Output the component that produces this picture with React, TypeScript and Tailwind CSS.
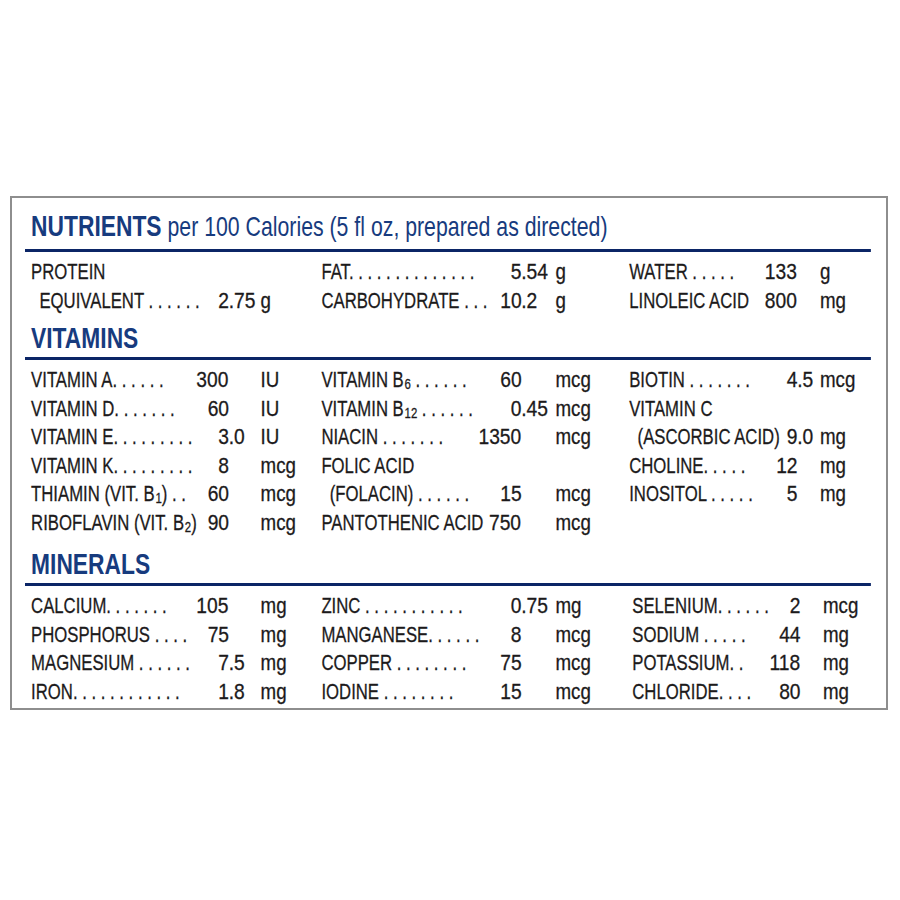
import React from 'react';

// Label type is set in Liberation Sans and squeezed horizontally (scale-x) to get the
// condensed Helvetica look of the printed panel. All widths below are pre-scale values.

type Entry = {
  label: React.ReactNode;
  int?: string;
  frac?: string;
  unit?: string;
  indent?: boolean;
};

type Col = { labelW: string; intW: string; fracW: string };

const COLS: Col[] = [
  { labelW: 'w-[207px]', intW: 'w-[53px]', fracW: 'w-[42px]' },
  { labelW: 'w-[197px]', intW: 'w-[66px]', fracW: 'w-[45px]' },
  { labelW: 'w-[168px]', intW: 'w-[53px]', fracW: 'w-[30px]' },
];

const Sub = ({ children }: { children: React.ReactNode }) => (
  <sub className="text-[15px] leading-none relative -bottom-[2px] ml-[1px]">{children}</sub>
);

const nutrients: Entry[][] = [
  [
    { label: 'PROTEIN' },
    { label: 'EQUIVALENT . . . . . .', int: '2', frac: '.75', unit: 'g', indent: true },
  ],
  [
    { label: 'FAT. . . . . . . . . . . . . .', int: '5', frac: '.54', unit: 'g' },
    { label: 'CARBOHYDRATE . . .', int: '10', frac: '.2', unit: 'g' },
  ],
  [
    { label: 'WATER . . . . .', int: '133', unit: 'g' },
    { label: 'LINOLEIC ACID', int: '800', unit: 'mg' },
  ],
];

const vitamins: Entry[][] = [
  [
    { label: 'VITAMIN A. . . . . .', int: '300', unit: 'IU' },
    { label: 'VITAMIN D. . . . . . .', int: '60', unit: 'IU' },
    { label: 'VITAMIN E. . . . . . . . .', int: '3', frac: '.0', unit: 'IU' },
    { label: 'VITAMIN K. . . . . . . . .', int: '8', unit: 'mcg' },
    { label: <>THIAMIN (VIT. B<Sub>1</Sub>) . .</>, int: '60', unit: 'mcg' },
    { label: <>RIBOFLAVIN (VIT. B<Sub>2</Sub>)</>, int: '90', unit: 'mcg' },
  ],
  [
    { label: <>VITAMIN B<Sub>6</Sub> . . . . . .</>, int: '60', unit: 'mcg' },
    { label: <>VITAMIN B<Sub>12</Sub> . . . . . .</>, int: '0', frac: '.45', unit: 'mcg' },
    { label: 'NIACIN . . . . . . .', int: '1350', unit: 'mcg' },
    { label: 'FOLIC ACID' },
    { label: '(FOLACIN) . . . . . .', int: '15', unit: 'mcg', indent: true },
    { label: 'PANTOTHENIC ACID', int: '750', unit: 'mcg' },
  ],
  [
    { label: 'BIOTIN . . . . . . .', int: '4', frac: '.5', unit: 'mcg' },
    { label: 'VITAMIN C' },
    { label: '(ASCORBIC ACID)', int: '9', frac: '.0', unit: 'mg', indent: true },
    { label: 'CHOLINE. . . . .', int: '12', unit: 'mg' },
    { label: 'INOSITOL . . . . .', int: '5', unit: 'mg' },
  ],
];

const minerals: Entry[][] = [
  [
    { label: 'CALCIUM. . . . . . .', int: '105', unit: 'mg' },
    { label: 'PHOSPHORUS . . . .', int: '75', unit: 'mg' },
    { label: 'MAGNESIUM . . . . . .', int: '7', frac: '.5', unit: 'mg' },
    { label: 'IRON. . . . . . . . . . . .', int: '1', frac: '.8', unit: 'mg' },
  ],
  [
    { label: 'ZINC . . . . . . . . . . .', int: '0', frac: '.75', unit: 'mg' },
    { label: 'MANGANESE. . . . . .', int: '8', unit: 'mcg' },
    { label: 'COPPER . . . . . . . .', int: '75', unit: 'mcg' },
    { label: 'IODINE . . . . . . . .', int: '15', unit: 'mcg' },
  ],
  [
    { label: 'SELENIUM. . . . . .', int: '2', unit: 'mcg' },
    { label: 'SODIUM . . . . .', int: '44', unit: 'mg' },
    { label: 'POTASSIUM. .', int: '118', unit: 'mg' },
    { label: 'CHLORIDE. . . .', int: '80', unit: 'mg' },
  ],
];

function Row({ e, col }: { e: Entry; col: Col }) {
  return (
    <div className="flex items-baseline whitespace-nowrap h-[28.5px]">
      <div className={`${col.labelW} flex-none ${e.indent ? 'pl-[11px]' : ''}`}>{e.label}</div>
      {e.int !== undefined && (
        <>
          {/* figures are wider than the condensed caps: widen them back a bit */}
          <div className={`${col.intW} flex-none text-right`}>
            <span className="inline-block origin-right scale-x-[1.15]">{e.int}</span>
          </div>
          <div className={`${col.fracW} flex-none`}>
            <span className="inline-block origin-left scale-x-[1.15]">{e.frac}</span>
          </div>
          {e.unit && (
            <div className="flex-none">
              <span className="inline-block origin-left scale-x-[1.12]">{e.unit}</span>
            </div>
          )}
        </>
      )}
    </div>
  );
}

function Grid({ data, last = false }: { data: Entry[][]; last?: boolean }) {
  return (
    <div
      className={`grid grid-cols-[382px_405px_1fr] pl-[8px] pt-[6px] [-webkit-text-stroke:0.3px_#1c1a1b] ${
        last ? '[&>div:last-child]:pl-[4px]' : ''
      }`}
    >
      {data.map((col, i) => (
        <div key={i} className="flex flex-col">
          {col.map((e, j) => (
            <Row key={j} e={e} col={COLS[i]} />
          ))}
        </div>
      ))}
    </div>
  );
}

function Heading({ children, className = '' }: { children: React.ReactNode; className?: string }) {
  return (
    <div className={`border-b-[3px] border-[#0b2566] pl-[8px] ${className}`}>
      <div className="h-[28px] flex items-end text-[30px] leading-[28px] text-[#173b7e] whitespace-nowrap">
        {children}
      </div>
    </div>
  );
}

export default function App() {
  return (
    <div className="w-[900px] h-[900px] bg-white pt-[196px] pl-[10px]">
      <div
        className="w-[878px] border-2 border-[#8e8e8e] pl-[13px] pt-[15px] pb-[2px] overflow-hidden"
        style={{ fontFamily: '"Liberation Sans", Arial, sans-serif' }}
      >
        <div className="w-[1113px] origin-left scale-x-[0.76] text-[#1c1a1b] text-[22px] leading-[28.5px]">
          <Heading className="pb-[8px]">
            <span className="font-bold leading-none">NUTRIENTS</span>
            <span className="text-[28px] leading-none">&nbsp;per 100 Calories (5 fl oz, prepared as directed)</span>
          </Heading>
          <Grid data={nutrients} />
          <Heading className="mt-[10px] pb-[4px]">
            <span className="font-bold leading-none">VITAMINS</span>
          </Heading>
          <Grid data={vitamins} />
          <Heading className="mt-[14px] pb-[4px]">
            <span className="font-bold leading-none">MINERALS</span>
          </Heading>
          <Grid data={minerals} last />
        </div>
      </div>
    </div>
  );
}
